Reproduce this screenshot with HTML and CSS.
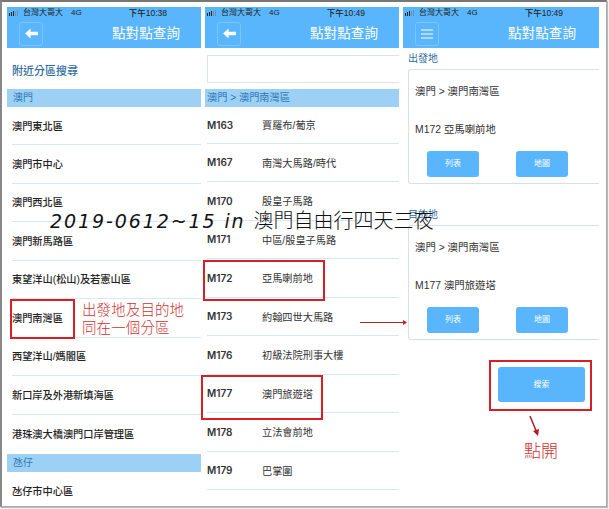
FILE: index.html
```html
<!DOCTYPE html>
<html lang="zh-Hant">
<head>
<meta charset="utf-8">
<title>點對點查詢</title>
<link rel="stylesheet" href="styles.css">
</head>
<body>
<main class="frame">
  <section class="phone">
    <header class="head">
      <div class="status"><span class="bars"><i></i><i></i><i></i><i class="off"></i><i class="off"></i></span><span class="carrier">台灣大哥大</span><span class="net">4G</span><span class="time">下午10:38</span></div>
      <div class="titlebar">
        <span class="iconbox"><svg viewBox="0 0 14 12" width="13" height="11"><path d="M0 6 6 .5V4h8v4H6v3.5z" fill="#fff"/></svg></span>
        <h1 class="title">點對點查詢</h1>
      </div>
    </header>
    <div class="nearby">附近分區搜尋</div>
    <div class="band">澳門</div>
    <ul class="list districts">
      <li class="first">澳門東北區</li>
      <li>澳門市中心</li>
      <li>澳門西北區</li>
      <li>澳門新馬路區</li>
      <li>東望洋山(松山)及若憲山區</li>
      <li>澳門南灣區</li>
      <li>西望洋山/媽閣區</li>
      <li>新口岸及外港新填海區</li>
      <li class="last">港珠澳大橋澳門口岸管理區</li>
    </ul>
    <div class="band">氹仔</div>
    <ul class="list districts">
      <li class="first plain">氹仔市中心區</li>
    </ul>
  </section>

  <section class="phone">
    <header class="head">
      <div class="status"><span class="bars"><i></i><i></i><i></i><i class="off"></i><i class="off"></i></span><span class="carrier">台灣大哥大</span><span class="net">4G</span><span class="time">下午10:49</span></div>
      <div class="titlebar">
        <span class="iconbox"><svg viewBox="0 0 14 12" width="13" height="11"><path d="M0 6 6 .5V4h8v4H6v3.5z" fill="#fff"/></svg></span>
        <h1 class="title">點對點查詢</h1>
      </div>
    </header>
    <div class="searchbox"></div>
    <div class="band">澳門 &gt; 澳門南灣區</div>
    <ul class="list stops">
      <li class="first"><b>M163</b><span>賈羅布/葡京</span></li>
      <li><b>M167</b><span>南灣大馬路/時代</span></li>
      <li><b>M170</b><span>殷皇子馬路</span></li>
      <li><b>M171</b><span>中區/殷皇子馬路</span></li>
      <li><b>M172</b><span>亞馬喇前地</span></li>
      <li><b>M173</b><span>約翰四世大馬路</span></li>
      <li><b>M176</b><span>初級法院刑事大樓</span></li>
      <li><b>M177</b><span>澳門旅遊塔</span></li>
      <li><b>M178</b><span>立法會前地</span></li>
      <li><b>M179</b><span>巴掌圍</span></li>
    </ul>
  </section>

  <section class="phone wide">
    <header class="head">
      <div class="status"><span class="bars"><i></i><i></i><i></i><i class="off"></i><i class="off"></i></span><span class="carrier">台灣大哥大</span><span class="net">4G</span><span class="time">下午10:49</span></div>
      <div class="titlebar">
        <span class="iconbox"><svg viewBox="0 0 14 12" width="14" height="12"><path d="M1 2h12M1 6h12M1 10h12" stroke="#fff" stroke-width="1" fill="none"/></svg></span>
        <h1 class="title">點對點查詢</h1>
      </div>
    </header>
    <div class="cards">
      <h2 class="cardlabel">出發地</h2>
      <div class="card">
        <p>澳門 &gt; 澳門南灣區</p>
        <p>M172 亞馬喇前地</p>
        <div class="btns"><button class="btn">列表</button><button class="btn">地圖</button></div>
      </div>
      <h2 class="cardlabel second">目的地</h2>
      <div class="card">
        <p>澳門 &gt; 澳門南灣區</p>
        <p>M177 澳門旅遊塔</p>
        <div class="btns"><button class="btn">列表</button><button class="btn">地圖</button></div>
      </div>
      <div class="searchrow"><button class="btn big">搜索</button></div>
    </div>
  </section>

  <div class="mark box1"></div>
  <div class="mark box2"></div>
  <div class="mark box3"></div>
  <div class="mark box4"></div>
  <p class="note note1">出發地及目的地<br>同在一個分區</p>
  <p class="note note2">點開</p>
  <svg class="arrows" viewBox="0 0 609 509" width="609" height="509">
    <path d="M360 322.5H404" stroke="#b02a2a" stroke-width="1.2" fill="none"/>
    <path d="M403 320 407 322.5 403 325z" fill="#d01818"/>
    <path d="M530 416 537 433" stroke="#b01c1c" stroke-width="1.5" fill="none"/>
    <path d="M533 431 538 436 539 429z" fill="#b01c1c"/>
  </svg>
  <p class="caption"><span class="latin">2019-0612~15 in </span>澳門自由行四天三夜</p>
</main>
</body>
</html>
```
FILE: styles.css
```css
* { box-sizing: border-box; }
html, body { margin: 0; padding: 0; background: #fff; }
body { width: 609px; height: 509px; overflow: hidden; font-family: "Liberation Sans", "Noto Sans CJK TC", sans-serif; }
.frame {
  position: relative;
  width: 607px;
  height: 507px;
  display: flex;
  gap: 4px;
  padding: 5px 0 0 5px;
  background: #fff;
  border-top: 2px solid #777;
  border-left: 2px solid #888;
  border-right: 1px solid #aaa;
  border-bottom: 1px solid #aaa;
  box-shadow: 1px 1px 1px #bbb;
  overflow: hidden;
}
.phone { width: 194px; flex: none; }
.phone.wide { width: 196px; }
.head { height: 41px; background: #5ab6fc; color: #fff; display: flex; flex-direction: column; }
.status { height: 10px; padding: 0 0 0 2px; display: flex; align-items: center; color: #222; font-size: 8px; line-height: 10px; margin-top: 1px; }
.bars { display: flex; align-items: flex-end; gap: 1px; width: 12px; height: 6px; margin-right: 2px; }
.bars i { width: 1px; background: #222; height: 3px; }
.bars i:nth-child(2) { height: 4px; }
.bars i:nth-child(3) { height: 5px; }
.bars i:nth-child(4) { height: 5px; }
.bars i:nth-child(5) { height: 6px; }
.bars i.off { background: #6c8fae; }
.net { margin-left: 8px; }
.time { margin-left: 47px; font-weight: 500; font-size: 8.5px; }
.titlebar { flex: 1; display: flex; align-items: center; padding: 1px 0 0 12px; }
.iconbox { width: 24px; height: 24px; border: 1px solid #7cc5fb; border-radius: 3px; display: flex; align-items: center; justify-content: center; }
.title { margin: 0 0 0 69px; font-size: 13.5px; line-height: 20px; font-weight: 400; color: #fff; letter-spacing: .1px; white-space: nowrap; }
.nearby { height: 41px; padding: 15px 0 0 5px; color: #2f6d9e; font-size: 11px; line-height: 16px; font-weight: 500; }
.band { height: 18px; background: #9dd0f5; color: #2f7ab4; font-size: 10px; line-height: 18px; padding-left: 6px; }
.phone:nth-child(2) .band { padding-left: 2px; font-size: 10.2px; }
.list { list-style: none; margin: 0; padding: 0; }
.list li { height: 38.5px; display: flex; align-items: center; font-size: 10.2px; font-weight: 500; color: #222; border-bottom: 1px solid #d6e8f5; }
.districts li { margin-left: 5px; padding-bottom: 1px; }
.districts li.first { height: 38px; }
.districts li.last { border-bottom: 0; height: 39px; }
.districts li.plain { border-bottom: 0; }
.stops li.first { height: 36.5px; }
.stops li { margin-left: 2px; }
.stops b { width: 55px; font-family: "Inter", sans-serif; font-size: 10px; font-weight: 600; color: #333; }
.stops span { font-size: 10.2px; font-weight: 400; color: #333; }
.searchbox { height: 28px; margin: 7px 0 6px 2px; border: 1px solid #dfe4ea; border-right: 0; background: #fff; }
.cards { padding-left: 5px; }
.cardlabel { margin: 0; height: 21px; padding-top: 3px; font-size: 10px; line-height: 16px; font-weight: 400; color: #2f6d9e; }
.cardlabel.second { margin-top: 20px; }
.card { height: 115px; border: 1px solid #d9dfe8; border-right: 0; border-radius: 3px 0 0 3px; padding-left: 6px; }
.card p { margin: 0; height: 38px; padding-top: 15px; font-size: 10.4px; line-height: 14px; color: #333; }
.btns { display: flex; gap: 37px; padding: 5px 0 0 12px; }
.btn { width: 52px; height: 26px; border: 0; border-radius: 3px; background: #5ab6fc; color: #fff; font: 8px/26px "Liberation Sans", "Noto Sans CJK TC", sans-serif; padding: 0; }
.searchrow { padding: 27px 0 0 90px; }
.btn.big { width: 87px; height: 35px; }
.mark { position: absolute; border: 2px solid #d81f26; }
.box1 { left: 8px; top: 297px; width: 65px; height: 40px; }
.box2 { left: 201px; top: 258px; width: 122px; height: 41px; }
.box3 { left: 199px; top: 373px; width: 122px; height: 45px; }
.box4 { left: 487px; top: 358px; width: 103px; height: 51px; }
.note { position: absolute; margin: 0; color: #cc3232; font-family: "Noto Sans CJK TC", sans-serif; font-weight: 300; }
.note1 { left: 80px; top: 298px; font-size: 14.5px; line-height: 18px; letter-spacing: .1px; white-space: nowrap; }
.note2 { left: 522px; top: 435px; font-size: 17px; line-height: 26px; white-space: nowrap; }
.arrows { position: absolute; left: -2px; top: -2px; }
.caption { position: absolute; left: 48px; top: 205px; margin: 0; font-family: "Noto Sans CJK TC", sans-serif; font-size: 20px; line-height: 26px; font-weight: 300; color: #111; white-space: nowrap; }
.latin { font-family: "DejaVu Sans", sans-serif; font-style: italic; font-size: 19px; letter-spacing: 1.9px; }
```
